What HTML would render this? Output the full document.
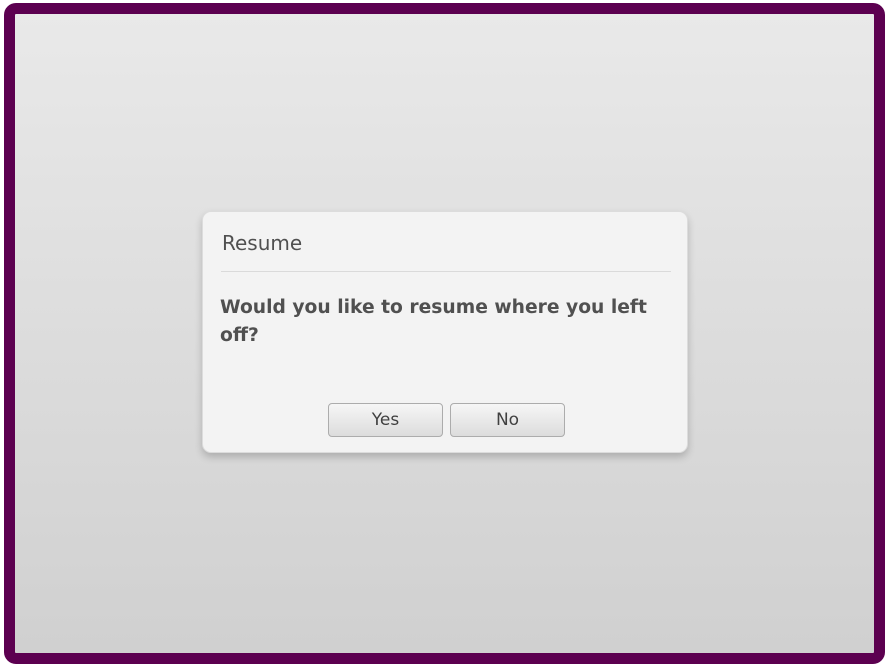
<!DOCTYPE html>
<html><head><meta charset="utf-8"><style>
html,body{margin:0;padding:0;width:889px;height:667px;background:#fff;overflow:hidden;font-family:"DejaVu Sans","Liberation Sans",sans-serif;}
.frame{position:absolute;left:4px;top:3px;width:859px;height:639px;border:11px solid #5c0050;border-radius:12px;background:linear-gradient(#e9e9e9,#d0d0d0);}
.dlg{position:absolute;left:202px;top:211px;width:484px;height:240px;background:#f3f3f3;border:1px solid #dcdcdc;border-radius:9px;box-shadow:0 4px 8px rgba(0,0,0,0.2);}
.title{position:absolute;left:19px;top:19px;font-size:20px;color:#505050;}
.line{position:absolute;left:18px;top:59px;width:450px;height:1px;background:#dadada;}
.msg{position:absolute;left:17px;top:82px;width:450px;font-size:18.7px;font-weight:bold;color:#505050;line-height:28px;}
.btn{position:absolute;top:191px;width:113px;height:32px;border:1px solid #acacac;border-radius:4px;background:linear-gradient(#f6f6f6,#dcdcdc);font-size:17px;color:#404040;text-align:center;line-height:32px;}
</style></head><body>
<div class="frame"></div>
<div class="dlg">
<div class="title">Resume</div>
<div class="line"></div>
<div class="msg">Would you like to resume where you left off?</div>
<div class="btn" style="left:125px">Yes</div>
<div class="btn" style="left:247px">No</div>
</div>
</body></html>
